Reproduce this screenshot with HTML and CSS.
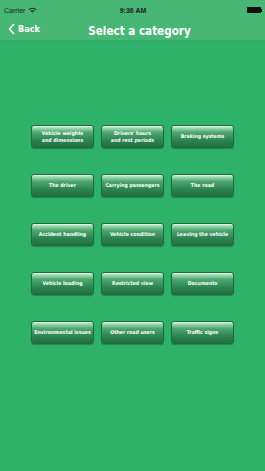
FILE: index.html
```html
<!DOCTYPE html>
<html lang="en">
<head>
  <meta charset="UTF-8" />
  <meta name="viewport" content="width=device-width, initial-scale=1.0"/>
  <title>Select a category</title>
  <link rel="stylesheet" href="styles.css">
</head>
<body>
  <header class="topbar">
    <div class="status">
      <span class="carrier">Carrier
        <svg class="wifi" width="9" height="7" viewBox="0 0 9 7">
          <path d="M0.5 2.2 A6 6 0 0 1 8.5 2.2 L7.6 3.1 A4.7 4.7 0 0 0 1.4 3.1 Z" fill="#222"/>
          <path d="M2.2 3.9 A3.6 3.6 0 0 1 6.8 3.9 L5.9 4.8 A2.3 2.3 0 0 0 3.1 4.8 Z" fill="#222"/>
          <path d="M3.9 5.6 A1 1 0 0 1 5.1 5.6 L4.5 6.5 Z" fill="#222"/>
        </svg>
      </span>
      <span class="clock">9:36 AM</span>
      <span class="battery"><span class="cell"></span><span class="tip"></span></span>
    </div>
    <nav class="navbar">
      <a href="#" class="back">
        <svg width="7" height="12" viewBox="0 0 7 12"><path d="M6 1 L1.5 6 L6 11" fill="none" stroke="#fff" stroke-width="1.6"/></svg>
        Back
      </a>
      <h1>Select a category</h1>
    </nav>
  </header>

  <main class="grid">
    <button class="cat two">Vehicle weights<br>and dimensions</button>
    <button class="cat two">Drivers' hours<br>and rest periods</button>
    <button class="cat">Braking systems</button>
    <button class="cat">The driver</button>
    <button class="cat">Carrying passengers</button>
    <button class="cat">The road</button>
    <button class="cat">Accident handling</button>
    <button class="cat">Vehicle condition</button>
    <button class="cat">Leaving the vehicle</button>
    <button class="cat">Vehicle loading</button>
    <button class="cat">Restricted view</button>
    <button class="cat">Documents</button>
    <button class="cat">Environmental issues</button>
    <button class="cat">Other road users</button>
    <button class="cat">Traffic signs</button>
  </main>
</body>
</html>
```

FILE: styles.css
```css
* {
  box-sizing: border-box;
}

body {
  margin: 0;
  width: 265px;
  height: 471px;
  background: #2eb26a;
  font-family: 'DejaVu Sans Condensed', 'DejaVu Sans', sans-serif;
}

.topbar {
  background: #48b675;
  height: 41px;
  border-bottom: 1px solid #3aa867;
}

.status {
  height: 20px;
  display: flex;
  align-items: center;
  justify-content: space-between;
  padding: 0 3px 0 4px;
  font-family: 'Liberation Sans', Arial, sans-serif;
  font-size: 7px;
  color: #1e1e1e;
}

.carrier {
  display: flex;
  align-items: center;
  gap: 3px;
  width: 60px;
}

.clock {
  font-weight: bold;
}

.battery {
  width: 60px;
  display: flex;
  justify-content: flex-end;
  align-items: center;
}

.battery .cell {
  width: 14px;
  height: 6px;
  background: #111;
  border-radius: 1px;
}

.battery .tip {
  width: 1px;
  height: 3px;
  background: #111;
}

.navbar {
  position: relative;
  height: 21px;
  display: flex;
  align-items: center;
  justify-content: center;
  padding-left: 14px;
}

.back {
  position: absolute;
  left: 8px;
  top: 3px;
  display: flex;
  align-items: center;
  gap: 3px;
  color: #fff;
  text-decoration: none;
  font-weight: bold;
  font-size: 9px;
}

.navbar h1 {
  margin: 0;
  color: #fff;
  font-size: 11.6px;
  font-weight: bold;
}

.grid {
  display: grid;
  grid-template-columns: repeat(3, 63px);
  grid-auto-rows: 23px;
  column-gap: 7px;
  row-gap: 26px;
  padding: 84px 0 0 31px;
}

.cat {
  margin: 0;
  padding: 0 2px;
  border: 1px solid #1d6a3a;
  border-radius: 3px;
  background: linear-gradient(#f4fff8 0%, #a6dcb8 8%, #4fa870 30%, #2a8250 70%, #236f42 100%);
  box-shadow: 0 1px 1px rgba(0,0,0,0.25);
  color: #fff;
  font-family: 'DejaVu Sans Condensed', 'DejaVu Sans', sans-serif;
  font-weight: bold;
  font-size: 5.2px;
  line-height: 7px;
  text-align: center;
  white-space: nowrap;
  overflow: hidden;
}
```
